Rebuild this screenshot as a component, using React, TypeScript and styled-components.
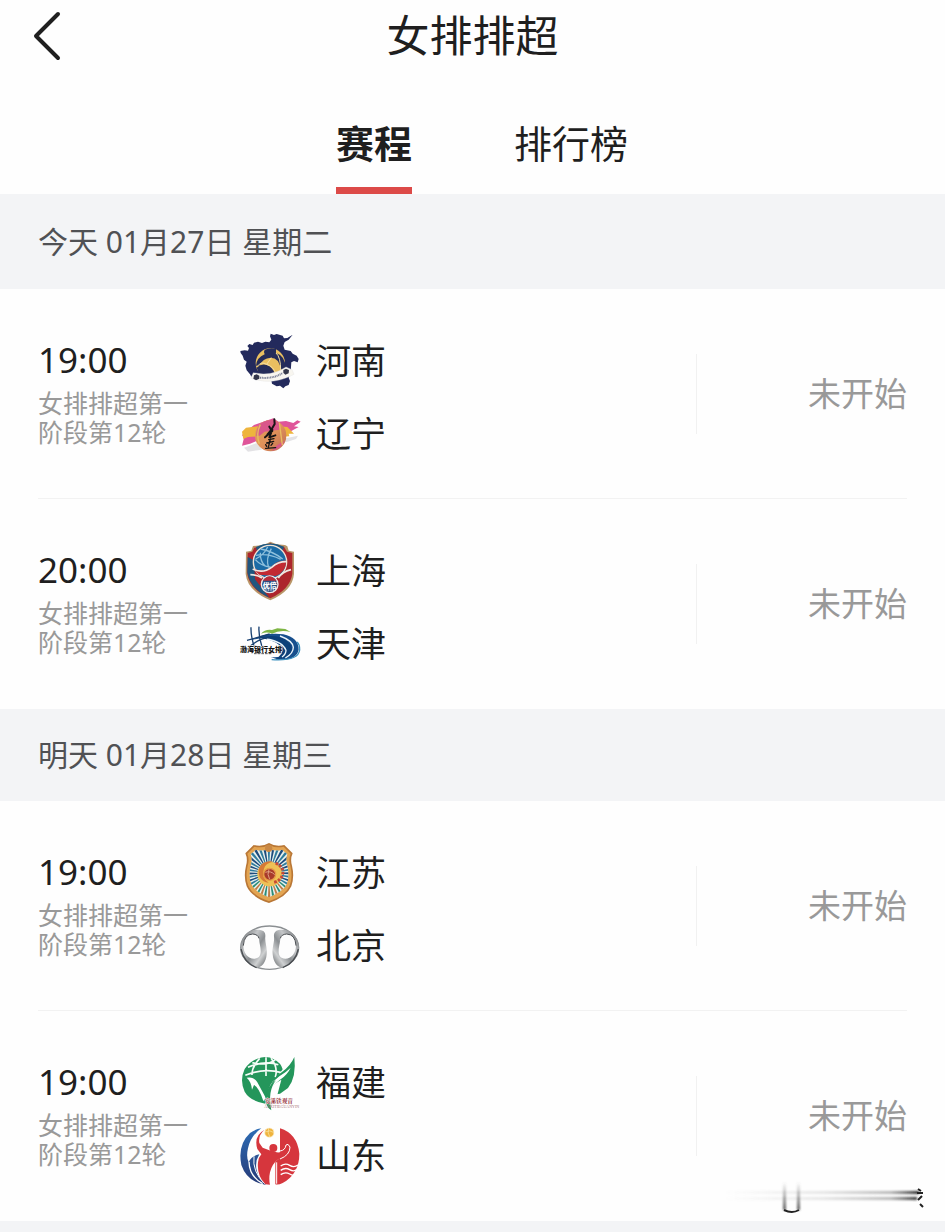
import React from "react";
import styled, { createGlobalStyle } from "styled-components";

const GlobalStyle = createGlobalStyle`
  *, *::before, *::after { box-sizing: border-box; }
  body {
    margin: 0;
    background: #fefefe;
    color: #1f1f1f;
    font-family: "Noto Sans", "Noto Sans CJK SC", sans-serif;
  }
  h1, h2, p, ul { margin: 0; padding: 0; font-weight: 400; }
  ul { list-style: none; }
`;

const Page = styled.main`
  position: relative;
  min-height: 100vh;
  overflow: hidden;
`;

const Header = styled.header`
  display: grid;
  grid-template-columns: 96px 1fr 96px;
  align-items: center;
  height: 72px;
`;

const BackButton = styled.button`
  display: flex;
  align-items: center;
  height: 72px;
  padding: 0 0 0 32px;
  border: 0;
  background: none;
  color: inherit;
  cursor: pointer;
`;

const Title = styled.h1`
  font-size: 43px;
  line-height: 72px;
  text-align: center;
`;

const Tabs = styled.nav`
  display: flex;
  justify-content: center;
  height: 122px;
`;

const Tab = styled.button<{ $active?: boolean }>`
  display: flex;
  flex-direction: column;
  align-items: center;
  justify-content: flex-end;
  width: 197px;
  padding: 0;
  border: 0;
  background: none;
  color: inherit;
  font-family: inherit;
  font-size: 38px;
  line-height: 48px;
  font-weight: ${(p) => (p.$active ? 700 : 400)};
  cursor: pointer;

  &::after {
    content: "";
    width: 76px;
    height: 7px;
    margin-top: 20px;
    background: ${(p) => (p.$active ? "#dc4a48" : "transparent")};
  }
`;

const DayHeading = styled.h2<{ $first?: boolean }>`
  padding: ${(p) => (p.$first ? "27px 38px" : "25px 38px 26px")};
  background: #f3f4f6;
  color: #505154;
  font-size: 30px;
  line-height: 41px;
`;

const Match = styled.li`
  display: flex;
  align-items: flex-start;
  height: 210px;
  margin: 0 38px;
  padding-top: 42px;
  border-bottom: 1px solid #f2f2f2;

  &:last-child { border-bottom-color: transparent; }
`;

const Info = styled.div`
  flex: none;
  width: 202px;
  padding-right: 42px;
`;

const Time = styled.time`
  display: block;
  font-size: 35px;
  line-height: 58px;
`;

const Round = styled.p`
  color: #999;
  font-size: 25px;
  line-height: 29px;
`;

const Teams = styled.div`
  display: flex;
  flex: 1;
  flex-direction: column;
  gap: 13px;
`;

const TeamRow = styled.div`
  display: flex;
  align-items: center;
  gap: 16px;
  height: 60px;
  font-size: 35px;
  line-height: 60px;

  svg { flex: none; overflow: visible; }
`;

const Status = styled.div`
  display: flex;
  align-items: center;
  justify-content: flex-end;
  flex: none;
  width: 211px;
  height: 80px;
  margin-top: 23px;
  padding-bottom: 4px;
  border-left: 1px solid #f1f1f1;
  color: #999;
  font-size: 33px;
`;

const Footer = styled.div`
  height: 11px;
  background: #f3f4f6;
`;

const Smudge = styled.svg`
  position: absolute;
  right: 20px;
  bottom: 13px;
`;

const Henan = () => (
  <svg width="60" height="60" viewBox="30 18 180 180" aria-hidden="true">
    <path
      fill="#232a5c"
      d="M122 26L132 30L140 27L158 32L162 40L172 39L188 29L176 44L164 51L160 62L164 74L182 78L188 86L200 92L206 102L203 112L192 108L184 112L182 140L176 158L180 168L176 180L166 184L160 190L150 182L140 184L126 176L124 166L112 162L66 158L60 148L50 136L46 122L50 110L42 104L38 92L32 84L31 78L44 76L54 77L57 69L52 63L58 57L68 60L72 53L84 50L96 54L106 50L118 52L124 44L120 34Z"
    />
    <circle cx="121" cy="114" r="44" fill="#e9bf60" />
    <path fill="#252c59" d="M104 74Q122 66 138 72L138 84Q166 92 167 130L152 134Q148 98 122 98Q98 100 88 122L78 122Q80 98 104 88Q100 80 104 74Z" />
    <path fill="#252c59" d="M80 128Q94 114 110 120Q128 126 134 146L94 154Q84 144 80 128Z" />
    <path fill="none" stroke="#f4dfa4" strokeWidth="3" d="M82 124Q94 108 110 118L124 98M110 118Q130 124 138 146M138 84Q152 96 152 136" />
    <path fill="#f8f6f0" stroke="#dedede" d="M70 143Q124 156 168 126L186 134L192 148L180 154Q130 178 76 164L62 160Z" />
    <path fill="none" stroke="#777c93" strokeWidth="6" strokeDasharray="3 2" d="M90 158Q130 162 158 144" />
    <path fill="#34374a" d="M72 151L80 148L88 152L88 161L78 166L70 161ZM160 135L168 131L177 135L176 145L166 149L160 143Z" />
  </svg>
);

const Liaoning = () => (
  <svg width="60" height="60" viewBox="30 237 180 180" aria-hidden="true">
    <defs>
      <linearGradient id="ball" x1="0" y1="0" x2="1" y2="1">
        <stop offset="0" stopColor="#dfa653" />
        <stop offset=".5" stopColor="#e1925a" />
        <stop offset="1" stopColor="#bd6c52" />
      </linearGradient>
    </defs>
    <path fill="#e3e2e5" d="M42 368L80 354L96 374L54 380ZM160 341L204 332L198 342L168 352Z" />
    <path fill="#df5499" d="M36 362L42 338L36 330L72 300L130 280L146 290L168 288L190 294L202 286L212 290L192 304L206 306L184 318L166 326L160 340L90 344L60 356Z" />
    <path fill="#eeb43d" d="M36 320L48 308L84 304L80 334L54 336L40 342ZM142 304L172 306L192 326L176 326L178 334L146 336Z" />
    <circle cx="122" cy="332" r="47" fill="url(#ball)" />
    <path fill="#d9568a" d="M92 296q18-14 40-10l18 9-2 19-44 6-15 12-10 0q0-24 13-36zM126 377q24-4 38-28-17 5-28 16z" />
    <path fill="none" stroke="#e8bd61" strokeWidth="4" d="M91 299q-14 28-3 57M148 293l9 67" />
    <path fill="none" stroke="#181515" strokeWidth="6" strokeLinecap="round" strokeLinejoin="round" d="M133 283l1 14-12 20-10 12M122 312l-4-7M127 318l-22 19M127 314l-9 23 18-6" />
    <path fill="none" stroke="#181515" strokeWidth="4" strokeLinecap="round" d="M116 344l16-3M110 354l21-5M121 342l-6 25M107 359l3 5M128 355l-5 6M107 370l30-2" />
  </svg>
);

const Shanghai = () => (
  <svg width="60" height="60" viewBox="30 18 180 180" aria-hidden="true">
    <path fill="#b99668" d="M121 20L140 28L165 30L172 34L176 47L192 50V117Q188 167 121 196Q52 167 47 117L48 50L64 47L69 33Q102 32 121 20Z" />
    <path fill="#ad252c" d="M121 25L140 33L162 35L171 50L187 54V116Q181 162 121 190Q58 162 52 116L53 54L67 50L73 38Q101 35 121 25Z" />
    <path fill="#1f577f" d="M53 66L72 76L75 133L118 188Q60 162 52 112ZM78 36q43-20 84-1l-4 12q-42-20-77 1z" />
    <circle cx="120" cy="81" r="50" fill="#1b6ba5" stroke="#eee2d5" strokeWidth="4" />
    <path fill="#c22a32" d="M169 77q-1 35-32 46l-49-4q-11-8-14-17 29 10 49-6 22-21 46-19z" />
    <path fill="none" stroke="#8fc0dc" strokeWidth="4" d="M78 61q37-7 74 12M92 42q37 7 66 30M113 36q-12 25-36 36M124 41q-18 31-8 57M76 74q19 21 46 22M91 53q-1 25 15 41" />
    <path fill="none" stroke="#ede8e2" strokeWidth="5" d="M68 102q30 15 57-5 20-18 46-17M61 119q20 0 35 10M183 104q-26 6-38 25" />
    <circle cx="119" cy="148" r="25" fill="#2a4f83" stroke="#edebea" strokeWidth="4" />
    <path fill="#b92d39" d="M98 137q20-27 42 0z" />
    <text x="119" y="158" textAnchor="middle" fontFamily="Noto Sans CJK SC" fontSize="21" fontWeight="900" fill="#fff">优倍</text>
    <path stroke="#bfcbd8" strokeWidth="4" strokeDasharray="3 2" d="M104 165h30" />
  </svg>
);

const Tianjin = () => (
  <svg width="60" height="60" viewBox="30 237 180 180" aria-hidden="true">
    <path fill="#7eb544" d="M93 296q12-14 33-11l16-5 24 2 16 9q-31-8-56 5-15-7-33 0z" />
    <path fill="#174f8d" d="M64 315Q110 290 160 298Q206 308 206 344Q200 376 146 374L122 366Q166 370 180 346Q186 322 158 312Q118 302 64 315Z" />
    <path fill="#0d4079" d="M84 308Q140 296 168 314Q190 330 184 350Q174 370 136 374Q160 358 156 340Q140 314 84 308Z" />
    <path fill="none" stroke="#ecf5fa" strokeWidth="4" d="M150 303q38 14 40 34 0 19-24 32M110 312q48 8 58 34 0 12-12 20" />
    <path fill="none" stroke="#173f70" strokeWidth="4" d="M63 277q-1 25 10 59M87 275q-2 30 9 60M51 316l68-19M56 337q34-29 63-30" />
    <path fill="none" stroke="#3c91bf" strokeWidth="4" d="M125 374q80 5 84-29 1-16-8-24" />
    <text x="30" y="350" fontFamily="Noto Sans CJK SC" fontSize="21" fontWeight="900" fill="#111" stroke="#fff" strokeWidth="3" paintOrder="stroke">渤海银行女排</text>
    <path stroke="#555" strokeWidth="3" strokeDasharray="8 3" d="M72 356h52" />
  </svg>
);

const rays = Array.from({ length: 36 }, (_, i) => i * 10);

const Jiangsu = () => (
  <svg width="60" height="60" viewBox="30 24 180 180" aria-hidden="true">
    <defs>
      <clipPath id="shieldInner">
        <path d="M117 42Q138 50 156 44L172 58Q166 74 172 92Q180 124 170 148Q160 170 117 187Q74 170 64 148Q54 124 62 92Q68 74 62 58L78 44Q96 50 117 42Z" />
      </clipPath>
    </defs>
    <path fill="#b97736" d="M117 24Q136 36 163 30L188 55Q180 72 186 92Q194 126 184 154Q170 186 117 204Q64 186 50 154Q40 126 48 92Q54 72 46 55L71 30Q98 36 117 24Z" />
    <path fill="#e3a451" d="M117 29Q136 41 161 35L182 56Q175 73 181 92Q189 126 179 152Q166 182 117 199Q68 182 55 152Q45 126 53 92Q59 73 52 56L73 35Q98 41 117 29Z" />
    <g clipPath="url(#shieldInner)">
      <path fill="#e9f1ed" d="M50 20h140v185H50z" />
      {rays.map((angle, i) => (
        <path
          key={angle}
          fill={angle > 120 && angle < 240 ? (i % 2 ? "#2b8d79" : "#bf7c45") : i % 2 ? "#1d4b7c" : "#2f7b9c"}
          d="M117 115l-5-94h9z"
          transform={`rotate(${angle} 117 115)`}
        />
      ))}
    </g>
    <circle cx="119" cy="117" r="37" fill="#eec155" />
    <path fill="#d77b36" d="M87 98q15-23 42-18-23 5-27 21-10 26 14 42-35-5-29-45z" />
    <path fill="none" stroke="#c84a35" strokeWidth="9" strokeDasharray="8 4" d="M137 84q26 13 21 34-5 19-27 24" />
    <circle cx="119" cy="118" r="18" fill="#a83a2b" stroke="#e79c46" strokeWidth="4" />
    <path fill="none" stroke="#e0a184" strokeWidth="3" d="M106 112q16-6 28 7M117 103q-7 15 2 30" />
    <circle cx="116" cy="40" r="11" fill="#c98845" />
  </svg>
);

const Beijing = () => (
  <svg width="60" height="60" viewBox="30 243 180 180" aria-hidden="true">
    <defs>
      <linearGradient id="chrome" x1="0" y1="0" x2="1" y2="1">
        <stop offset="0" stopColor="#5d6164" />
        <stop offset=".35" stopColor="#c4c6c8" />
        <stop offset=".55" stopColor="#8b8f92" />
        <stop offset=".75" stopColor="#cfd1d2" />
        <stop offset="1" stopColor="#54585b" />
      </linearGradient>
      <path
        id="petal"
        fill="url(#chrome)"
        fillRule="evenodd"
        d="M32 330C38 300 54 284 82 284C102 284 107 292 106 305C104 322 112 335 110 358C108 385 92 400 78 397C50 388 32 365 32 330ZM40 330C40 355 54 371 72 371C87 371 91 362 92 352C93 338 88 325 87 312C86 302 76 297 66 297C48 298 40 315 40 330Z"
      />
    </defs>
    <ellipse cx="119" cy="338" rx="87" ry="65" fill="#fdfdfd" stroke="#8b8f92" strokeWidth="4" />
    <use href="#petal" />
    <use href="#petal" transform="matrix(-1 0 0 1 238 0)" />
    <path fill="none" stroke="#4a4e52" strokeWidth="4" d="M33 342Q42 384 80 398M205 342Q196 384 158 398" />
    <path fill="none" stroke="#4a4e52" strokeWidth="3" d="M40 332Q42 298 68 297Q84 298 87 310M198 332Q196 298 170 297Q154 298 151 310" />
  </svg>
);

const Fujian = () => (
  <svg width="60" height="60" viewBox="30 24 180 180" aria-hidden="true">
    <path fill="#24965b" d="M82 41Q108 30 132 43Q153 54 158 73L140 98Q118 114 112 148L106 176Q60 168 44 140Q28 106 44 72Q58 50 82 41Z" />
    <path fill="none" stroke="#f5fcf7" strokeWidth="5" d="M54 67q49-22 91-8M46 91q54-23 109-8M67 53q46 11 69-9M108 37v56M89 40q-24 26-23 50M123 40q22 27 13 57" />
    <path fill="#fff" d="M50 98Q72 94 82 112L108 160L100 168Q86 126 72 120L66 134Q64 110 50 98Z" />
    <path fill="#24965b" d="M193 36Q200 96 174 129L150 146L120 150L121 130Q126 100 155 82Q182 62 193 36Z" />
    <path fill="#fff" d="M182 68Q172 90 150 104Q124 122 116 156Q116 116 148 94Q168 82 182 68Z" />
    <path fill="#fff" d="M112 160Q122 118 154 104L142 150H204V194H124Z" />
    <path fill="#24965b" d="M107 155Q112 122 138 106Q112 138 124 196Q102 180 107 155Z" />
    <text x="104" y="175" fontFamily="Noto Serif CJK SC, Noto Sans CJK SC" fontSize="17" fontWeight="700" fill="#98383f" stroke="#fff" strokeWidth="2" paintOrder="stroke">安溪铁观音</text>
    <text x="103" y="190" fontFamily="Liberation Serif" fontSize="12" fill="#a7747a">ANXITIEGUANYIN</text>
  </svg>
);

const Shandong = () => (
  <svg width="60" height="60" viewBox="30 243 180 180" aria-hidden="true">
    <defs>
      <linearGradient id="wave" x1="0" y1="0" x2="0" y2="1">
        <stop offset="0" stopColor="#2d6cb4" />
        <stop offset="1" stopColor="#263a77" />
      </linearGradient>
    </defs>
    <path fill="url(#wave)" d="M94 250Q62 272 54 310Q48 336 56 352Q64 332 88 328Q74 350 80 376Q86 404 108 420Q52 412 34 360Q22 300 60 264Q76 252 94 250Z" />
    <path fill="none" stroke="#fff" strokeWidth="4" d="M57 350Q58 394 98 416" />
    <path fill="none" stroke="#fff" strokeWidth="3" d="M72 334Q66 380 104 416" />
    <path fill="#d6363d" d="M150 250Q202 266 208 326Q208 386 158 414Q146 420 136 418V350L150 338Z" />
    <path fill="#d6363d" d="M104 254Q84 270 88 294L98 308L118 316L140 322Q164 324 172 306L176 318Q168 336 146 342Q126 356 120 382Q116 402 120 419L106 418Q80 392 84 352Q86 336 94 328L82 312Q70 272 104 254Z" />
    <circle cx="130" cy="309" r="12" fill="#d6363d" />
    <path fill="none" stroke="#fff" strokeWidth="3" strokeLinejoin="round" d="M150 318Q166 316 168 300L174 298L180 306Q180 330 150 342M140 352V416" />
    <path fill="none" stroke="#fff" strokeWidth="4" d="M152 363q14-10 27-2t25-1M152 376q14-10 27-2t22-1M152 389q14-10 27-2t16-1" />
    <circle cx="118" cy="263" r="14" fill="#efb33e" stroke="#fff3d9" strokeWidth="2" />
    <path fill="none" stroke="#f8e8ac" strokeWidth="2" d="M105 261q15-8 27 2M116 249q-5 15 4 28" />
  </svg>
);

const days = [
  {
    label: "今天 01月27日 星期二",
    matches: [
      { time: "19:00", teams: [["河南", Henan], ["辽宁", Liaoning]] },
      { time: "20:00", teams: [["上海", Shanghai], ["天津", Tianjin]] },
    ],
  },
  {
    label: "明天 01月28日 星期三",
    matches: [
      { time: "19:00", teams: [["江苏", Jiangsu], ["北京", Beijing]] },
      { time: "19:00", teams: [["福建", Fujian], ["山东", Shandong]] },
    ],
  },
] as { label: string; matches: { time: string; teams: [string, React.FC][] }[] }[];

export default function App() {
  return (
    <>
      <GlobalStyle />
      <Page>
        <Header>
          <BackButton aria-label="返回">
            <svg width="32" height="50" viewBox="0 0 32 50" fill="none" stroke="currentColor" strokeWidth="4" strokeLinecap="round" strokeLinejoin="round">
              <path d="M26 3L4 25l22 22" />
            </svg>
          </BackButton>
          <Title>女排排超</Title>
        </Header>
        <Tabs>
          <Tab $active>赛程</Tab>
          <Tab>排行榜</Tab>
        </Tabs>
        {days.map((day, index) => (
          <section key={day.label}>
            <DayHeading $first={index === 0}>{day.label}</DayHeading>
            <ul>
              {day.matches.map((match, i) => (
                <Match key={i}>
                  <Info>
                    <Time>{match.time}</Time>
                    <Round>女排排超第一阶段第12轮</Round>
                  </Info>
                  <Teams>
                    {match.teams.map(([name, Logo]) => (
                      <TeamRow key={name}>
                        <Logo />
                        {name}
                      </TeamRow>
                    ))}
                  </Teams>
                  <Status>未开始</Status>
                </Match>
              ))}
            </ul>
          </section>
        ))}
        <Footer />
        <Smudge width="210" height="40" viewBox="0 0 210 40" aria-hidden="true">
          <defs>
            <linearGradient id="streak">
              <stop offset="0" stopColor="#999" stopOpacity="0" />
              <stop offset=".5" stopColor="#888" stopOpacity=".2" />
              <stop offset=".85" stopColor="#666" stopOpacity=".45" />
              <stop offset="1" stopColor="#222" />
            </linearGradient>
            <linearGradient id="fall" x1="0" y1="0" x2="0" y2="1">
              <stop offset="0" stopColor="#555" stopOpacity="0" />
              <stop offset="1" stopColor="#333" stopOpacity=".8" />
            </linearGradient>
            <filter id="soft" x="-20%" y="-100%" width="140%" height="300%">
              <feGaussianBlur stdDeviation="1" />
            </filter>
          </defs>
          <g filter="url(#soft)">
            <path fill="url(#streak)" d="M10 12h194v3H10zM10 18h192v3H10z" />
            <path fill="url(#fall)" d="M68 3h3v28h-3zM82 3h3v28h-3z" />
          </g>
          <path fill="none" stroke="#222" strokeWidth="2" d="M69 31q8 4 15 0" />
          <path fill="none" stroke="#222" strokeWidth="2" d="M203 10l3 2M202 14h6M207 17l-4 4M205 25l3 3" />
        </Smudge>
      </Page>
    </>
  );
}
